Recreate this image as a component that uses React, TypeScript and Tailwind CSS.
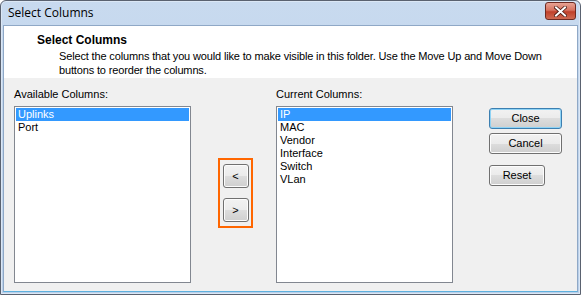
import React from "react";

const sysFont = { fontFamily: '"Liberation Sans", Arial, sans-serif' };

function ListBox({ items, selected }: { items: string[]; selected: number }) {
  return (
    <div className="w-[177px] h-[177px] border border-[#828790] bg-white p-px">
      {items.map((item, i) => (
        <div
          key={item}
          className={
            i === selected
              ? "h-[13px] leading-[13px] pl-[2px] bg-[#3399ff] text-white"
              : "h-[13px] leading-[13px] pl-[2px] text-black"
          }
        >
          {item}
        </div>
      ))}
    </div>
  );
}

function WinButton({
  label,
  width = "w-[73px]",
  focused = false,
  className = "",
}: {
  label: string;
  width?: string;
  focused?: boolean;
  className?: string;
}) {
  return (
    <div
      className={`${width} h-[21px] rounded-[3px] border ${
        focused
          ? "border-[#3c7fb1] shadow-[inset_0_0_0_1px_#8fd3f5]"
          : "border-[#707070] shadow-[inset_0_0_0_1px_#fcfcfc]"
      } bg-[linear-gradient(to_bottom,#f2f2f2_0%,#ebebeb_50%,#dddddd_50%,#cfcfcf_100%)] flex items-center justify-center text-black ${className}`}
    >
      {label}
    </div>
  );
}

export default function App() {
  return (
    <div
      className="w-[581px] h-[295px] bg-white text-[11px] text-black"
      style={sysFont}
    >
      <div className="w-[581px] h-[295px] flex flex-col rounded-t-[6px] border border-[#5a6270] bg-[linear-gradient(to_bottom,#c8daef,#b9cfe9)] shadow-[inset_0_0_0_1px_#dbe7f5]">
        {/* Title bar */}
        <div className="h-[24px] flex items-center justify-between pl-[7px] pr-[4px]">
          <span className="text-[12px] text-black" style={{ fontFamily: '"Open Sans", "Liberation Sans", sans-serif' }}>
            Select Columns
          </span>
          <div className="w-[31px] h-[18px] mt-[-4px] rounded-[3px] border border-[#6d2a22] bg-[linear-gradient(to_bottom,#e8a394_0%,#d7725f_45%,#c0412b_55%,#cf6a52_100%)] flex items-center justify-center">
            <svg width="13" height="11" viewBox="0 0 13 11">
              <path
                d="M2 1.5 L11 9.5 M11 1.5 L2 9.5"
                stroke="#4a1a12"
                strokeWidth="3.6"
                strokeLinecap="square"
              />
              <path
                d="M2 1.5 L11 9.5 M11 1.5 L2 9.5"
                stroke="#ffffff"
                strokeWidth="2"
                strokeLinecap="square"
              />
            </svg>
          </div>
        </div>

        {/* Client area */}
        <div className="flex-1 mx-[2px] mb-[2px] border border-[#8fa8c6] border-b-[#5eb1de] flex flex-col">
          {/* Header */}
          <div className="h-[52px] bg-white pt-[6px]">
            <div className="pl-[33px] text-[12px] font-bold leading-[16px]">
              Select Columns
            </div>
            <div className="pl-[55px] leading-[14px] mt-[1px] tracking-[-0.15px]">
              <div>
                Select the columns that you would like to make visible in this
                folder. Use the Move Up and Move Down
              </div>
              <div>buttons to reorder the columns.</div>
            </div>
          </div>

          {/* Body */}
          <div className="flex-1 bg-[#f0f0f0] flex pl-[10px] pt-[9px]">
            <div className="flex flex-col">
              <div className="h-[19px] leading-[14px]">Available Columns:</div>
              <ListBox items={["Uplinks", "Port"]} selected={0} />
            </div>

            <div className="ml-[27px] mt-[71px] w-[35px] h-[70px] border-2 border-[#ff6600] flex flex-col items-center pt-[4px] gap-[10px]">
              <WinButton label="<" width="w-[26px]" className="h-[24px]" />
              <WinButton label=">" width="w-[26px]" className="h-[24px]" />
            </div>

            <div className="flex flex-col ml-[23px]">
              <div className="h-[19px] leading-[14px]">Current Columns:</div>
              <ListBox
                items={["IP", "MAC", "Vendor", "Interface", "Switch", "VLan"]}
                selected={0}
              />
            </div>

            <div className="flex flex-col ml-[36px] pt-[21px]">
              <WinButton label="Close" focused />
              <WinButton label="Cancel" className="mt-[4px]" />
              <WinButton label="Reset" width="w-[56px]" className="mt-[11px]" />
            </div>
          </div>
        </div>
      </div>
    </div>
  );
}
